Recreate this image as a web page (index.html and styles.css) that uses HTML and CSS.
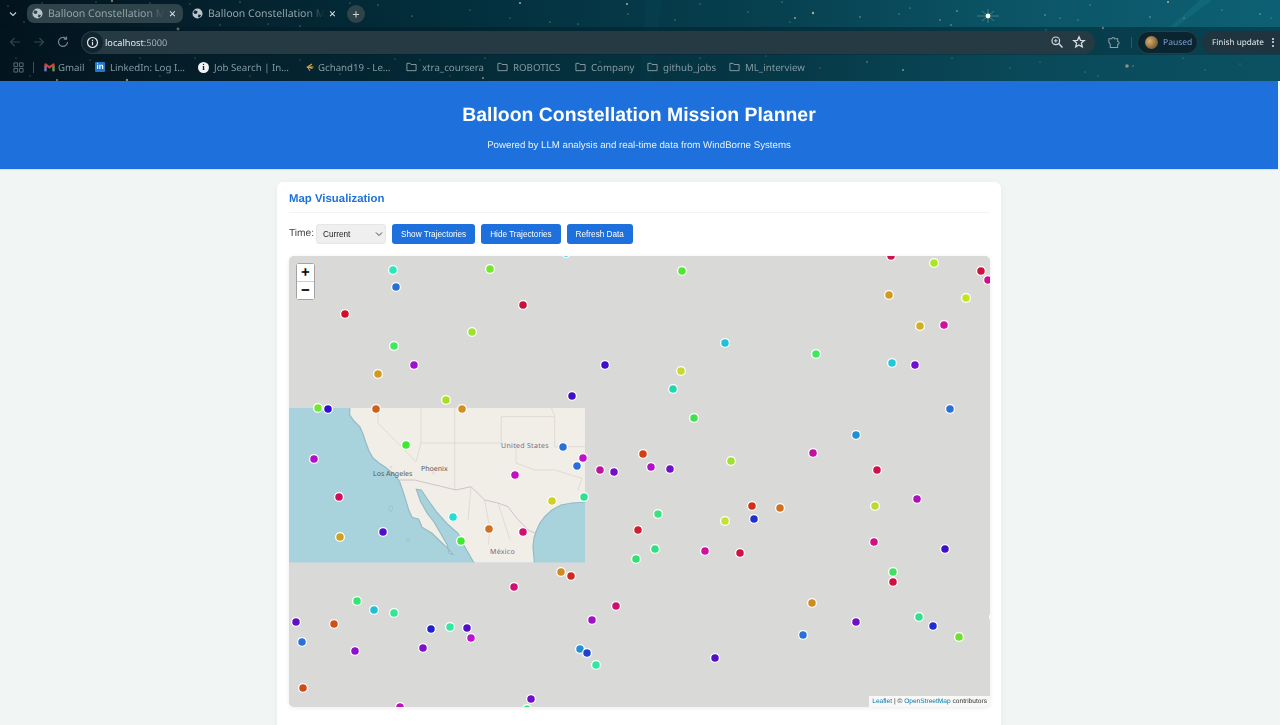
FILE: index.html
```html
<!DOCTYPE html>
<html lang="en">
<head>
  <meta charset="UTF-8">
  <title>Balloon Constellation Mission Planner</title>
  <meta name="viewport" content="width=device-width, initial-scale=1.0">
  <link rel="stylesheet" href="styles.css">
</head>
<body>
  <div class="browser">
    <svg class="stars" viewBox="0 0 1280 81" aria-hidden="true">
      <polygon points="1170,27 1176,27 1212,0 1200,0" fill="#2fa0a8" opacity="0.14"/>
      <polygon points="640,81 652,81 662,0 646,0" fill="#2fa0a8" opacity="0.04"/>
      <g fill="#d8c8a8" opacity="0.8">
        <circle cx="178" cy="29" r="1.4"/><circle cx="112" cy="1" r="0.9"/><circle cx="57" cy="80" r="1"/>
        <circle cx="127" cy="80" r="1.2"/><circle cx="24" cy="22" r="0.5"/><circle cx="70" cy="8" r="0.5"/>
        <circle cx="8" cy="6" r="0.5"/><circle cx="42" cy="3" r="0.5"/><circle cx="96" cy="2" r="0.5"/>
        <circle cx="150" cy="3" r="0.5"/><circle cx="190" cy="4" r="0.5"/><circle cx="220" cy="25" r="0.5"/>
        <circle cx="240" cy="2" r="0.6"/><circle cx="268" cy="24" r="0.5"/><circle cx="300" cy="26" r="0.6"/>
        <circle cx="350" cy="3" r="0.5"/><circle cx="16" cy="58" r="0.5"/><circle cx="30" cy="76" r="0.5"/>
        <circle cx="90" cy="60" r="0.5"/><circle cx="140" cy="58" r="0.5"/><circle cx="160" cy="76" r="0.5"/>
        <circle cx="195" cy="58" r="0.5"/><circle cx="250" cy="76" r="0.5"/><circle cx="300" cy="60" r="0.5"/>
        <circle cx="340" cy="74" r="0.6"/><circle cx="395" cy="59" r="0.5"/><circle cx="450" cy="76" r="0.5"/>
        <circle cx="483" cy="78" r="1"/><circle cx="378" cy="5" r="0.6"/><circle cx="412" cy="16" r="0.6"/>
        <circle cx="470" cy="10" r="0.5"/><circle cx="520" cy="3" r="1"/><circle cx="510" cy="18" r="0.5"/>
        <circle cx="550" cy="22" r="0.6"/><circle cx="578" cy="24" r="0.6"/><circle cx="627" cy="4" r="1"/>
        <circle cx="628" cy="14" r="0.6"/><circle cx="675" cy="20" r="0.6"/><circle cx="748" cy="12" r="0.6"/>
        <circle cx="700" cy="4" r="0.5"/><circle cx="782" cy="2" r="0.6"/><circle cx="790" cy="22" r="0.5"/>
        <circle cx="795" cy="18" r="0.9"/><circle cx="813" cy="13" r="1.2"/><circle cx="860" cy="17" r="0.7"/>
        <circle cx="899" cy="14" r="0.6"/><circle cx="910" cy="8" r="0.6"/><circle cx="940" cy="20" r="0.7"/>
        <circle cx="957" cy="11" r="0.8"/><circle cx="951" cy="25" r="0.7"/><circle cx="1045" cy="15" r="0.7"/>
        <circle cx="1060" cy="18" r="0.6"/><circle cx="1078" cy="20" r="0.6"/><circle cx="1090" cy="5" r="0.6"/>
        <circle cx="1150" cy="17" r="0.7"/><circle cx="1168" cy="2" r="1"/><circle cx="1184" cy="18" r="0.6"/>
        <circle cx="1222" cy="10" r="0.6"/><circle cx="1260" cy="14" r="0.7"/><circle cx="1271" cy="18" r="0.5"/>
        <circle cx="420" cy="60" r="0.5"/><circle cx="485" cy="58" r="0.6"/><circle cx="600" cy="62" r="0.6"/>
        <circle cx="700" cy="58" r="0.6"/><circle cx="766" cy="56" r="0.5"/><circle cx="820" cy="68" r="0.6"/>
        <circle cx="867" cy="62" r="0.8"/><circle cx="903" cy="70" r="1"/><circle cx="952" cy="58" r="0.6"/>
        <circle cx="1010" cy="68" r="0.6"/><circle cx="1040" cy="62" r="0.5"/><circle cx="1085" cy="72" r="0.6"/>
        <circle cx="1183" cy="58" r="0.6"/><circle cx="1205" cy="70" r="0.6"/><circle cx="1240" cy="64" r="0.5"/>
        <circle cx="1046" cy="30" r="0.7"/><circle cx="1103" cy="28" r="1.2"/><circle cx="1098" cy="76" r="0.6"/>
      </g>
      <g>
        <path d="M977 16H999M988 9V23M982 11L994 21M994 11L982 21" stroke="#cfe8e0" stroke-width="0.5" opacity="0.6"/>
        <circle cx="988" cy="16" r="2.4" fill="#fff6d8"/>
        <circle cx="1127" cy="66" r="1.8" fill="#b8b090"/>
        <circle cx="1133" cy="66" r="0.8" fill="#a8a088"/>
      </g>
    </svg>

    <div class="tabs-row">
      <svg class="tab-list" viewBox="0 0 10 10"><path d="M2 3.5L5 6.5L8 3.5" fill="none" stroke="#c8d2d6" stroke-width="1.1"/></svg>
      <div class="tab active">
        <svg class="globe" viewBox="0 0 12 12"><circle cx="6" cy="6" r="5.5" fill="#b9c4c8"/><path d="M3 2.5L6 3.5L5.5 6L3 6.5L1.5 5ZM7 7L10 7.5L8 10.5L6.5 9.5Z" fill="#2f434b"/></svg>
        <span class="tab-title">Balloon Constellation Mi</span>
        <span class="tab-close">×</span>
      </div>
      <div class="tab">
        <svg class="globe" viewBox="0 0 12 12"><circle cx="6" cy="6" r="5.5" fill="#b9c4c8"/><path d="M3 2.5L6 3.5L5.5 6L3 6.5L1.5 5ZM7 7L10 7.5L8 10.5L6.5 9.5Z" fill="#0a2733"/></svg>
        <span class="tab-title">Balloon Constellation Mi</span>
        <span class="tab-close">×</span>
      </div>
      <span class="new-tab">+</span>
    </div>

    <div class="toolbar">
      <svg class="nav-icon dim" viewBox="0 0 14 14"><path d="M12 7H2.5M6.5 3L2.5 7L6.5 11" fill="none" stroke="currentColor" stroke-width="1.2"/></svg>
      <svg class="nav-icon dim" viewBox="0 0 14 14"><path d="M2 7H11.5M7.5 3L11.5 7L7.5 11" fill="none" stroke="currentColor" stroke-width="1.2"/></svg>
      <svg class="nav-icon" viewBox="0 0 14 14"><path d="M11.5 7A4.5 4.5 0 1 1 10 3.6M10.5 1.5V4.2H7.8" fill="none" stroke="currentColor" stroke-width="1.2"/></svg>
      <div class="omnibox">
        <span class="site-info">
          <svg viewBox="0 0 12 12"><circle cx="6" cy="6" r="4.6" fill="none" stroke="#e4eaec" stroke-width="1.1"/><path d="M6 5.4V8.6M6 3.4V4.5" stroke="#e4eaec" stroke-width="1.1"/></svg>
        </span>
        <span class="url">localhost<span class="url-port">:5000</span></span>
        <span class="omni-actions">
          <svg viewBox="0 0 14 14"><circle cx="5.8" cy="5.8" r="3.8" fill="none" stroke="#d4dcdf" stroke-width="1.2"/><path d="M8.6 8.6L12.5 12.5" stroke="#d4dcdf" stroke-width="1.4"/><path d="M4 5.8H7.6M5.8 4V7.6" stroke="#d4dcdf" stroke-width="0.9"/></svg>
          <svg viewBox="0 0 14 14"><path d="M7 1.8L8.5 5.3L12.3 5.6L9.4 8.1L10.3 11.9L7 9.9L3.7 11.9L4.6 8.1L1.7 5.6L5.5 5.3Z" fill="none" stroke="#d4dcdf" stroke-width="1.3"/></svg>
        </span>
      </div>
      <svg class="puzzle" viewBox="0 0 14 14"><path d="M2 3H5.2C5.2 1 8.2 1 8.2 3H11.5V6C13.5 6 13.5 9 11.5 9V12.5H3.5V9.5C3.5 8 2 7.5 2 6.5Z" fill="none" stroke="#8ea0a6" stroke-width="1.1"/></svg>
      <span class="tool-sep"></span>
      <div class="profile-pill"><span class="avatar"></span><span>Paused</span></div>
      <div class="update-pill"><span>Finish update</span><span class="kebab"><i></i><i></i><i></i></span></div>
    </div>

    <div class="bookmarks">
      <svg class="apps" viewBox="0 0 12 12"><path d="M1 1H5V5H1ZM7 1H11V5H7ZM1 7H5V11H1ZM7 7H11V11H7Z" fill="none" stroke="#5f7278" stroke-width="1"/></svg>
      <span class="bm-sep"></span>
      <a class="bm bm-gmail">
        <svg viewBox="0 0 12 10"><path d="M0.5 1.5V9.5H2.8V4.5L6 7L9.2 4.5V9.5H11.5V1.5L10 0.8L6 4L2 0.8Z" fill="#d8402f"/><path d="M9.2 9.5H11.5V3L9.2 4.5Z" fill="#3aa757"/><path d="M0.5 3V9.5H2.8V4.5Z" fill="#4a80e8"/></svg>
        <span>Gmail</span>
      </a>
      <a class="bm bm-linkedin">
        <span class="li-icon">in</span>
        <span>LinkedIn: Log I…</span>
      </a>
      <a class="bm bm-job">
        <span class="info-icon">i</span>
        <span>Job Search | In…</span>
      </a>
      <a class="bm bm-leet">
        <svg viewBox="0 0 10 10"><path d="M7.5 2L3 5L8 6.5M5 5H9" fill="none" stroke="#e8a33a" stroke-width="1.2"/><path d="M3 5L5.5 9" fill="none" stroke="#aab" stroke-width="1"/></svg>
        <span>Gchand19 - Le…</span>
      </a>
      <a class="bm bm-xtra"><svg viewBox="0 0 12 10"><path d="M1 1H4.5L5.5 2.3H11V9H1Z" fill="none" stroke="#8fa0a8" stroke-width="1"/></svg><span>xtra_coursera</span></a>
      <a class="bm bm-robotics"><svg viewBox="0 0 12 10"><path d="M1 1H4.5L5.5 2.3H11V9H1Z" fill="none" stroke="#8fa0a8" stroke-width="1"/></svg><span>ROBOTICS</span></a>
      <a class="bm bm-company"><svg viewBox="0 0 12 10"><path d="M1 1H4.5L5.5 2.3H11V9H1Z" fill="none" stroke="#8fa0a8" stroke-width="1"/></svg><span>Company</span></a>
      <a class="bm bm-github"><svg viewBox="0 0 12 10"><path d="M1 1H4.5L5.5 2.3H11V9H1Z" fill="none" stroke="#8fa0a8" stroke-width="1"/></svg><span>github_jobs</span></a>
      <a class="bm"><svg viewBox="0 0 12 10"><path d="M1 1H4.5L5.5 2.3H11V9H1Z" fill="none" stroke="#8fa0a8" stroke-width="1"/></svg><span>ML_interview</span></a>
    </div>
  </div>

  <div class="page">
    <header class="site-header">
      <h1>Balloon Constellation Mission Planner</h1>
      <p>Powered by LLM analysis and real-time data from WindBorne Systems</p>
    </header>

    <main class="card">
      <h2>Map Visualization</h2>

      <div class="controls">
        <label for="timeSelect">Time:</label>
        <select id="timeSelect">
          <option>Current</option>
        </select>
        <button>Show Trajectories</button>
        <button>Hide Trajectories</button>
        <button>Refresh Data</button>
      </div>

      <div class="map">
        <svg class="map-canvas" viewBox="289 256 701 451" aria-label="Balloon map">
          <!-- the one tile that loaded -->
          <svg x="289" y="408" width="296" height="154.5" viewBox="289 408 296 154.5">
            <rect x="289" y="408" width="296" height="155" fill="#a9d3dc"/>
            <path class="land" d="M350 400L349.7 415L354 421L359.7 426.7L363 434L366 443L369 451L373 458L379 463L384.7 466.7L390 471L394.7 475L399.7 481.7L404.7 496.7L408.7 510L412 517.3L418.7 519.3L422 527.3L432 533.3L440.7 541.7L448.7 549.3L453 554.5L449 553L447.3 545L439.7 531.7L434 522L427.3 513.3L420.7 501.7L416.3 489.3L421.3 490L428 500L436.3 511.7L447.3 524L458 533.3L464.7 546.7L478 570L535 570L533 546.7L534 538L536 531.7L540 523L544.7 516.7L552 510L561 505L572 503L595 501.7L595 400Z"/>
            <g class="state-lines">
              <path d="M378 400V423L416 461.7"/>
              <path d="M421 400V443L416 461.7"/>
              <path d="M454.7 400V490"/>
              <path d="M420.7 443H501.3V416.7H554.7V446.7H585"/>
              <path d="M516 443V463L535 470L555 470L576 476.7L582 478L578 490"/>
              <path d="M548 400L555 416.7"/>
              <path d="M471 487L468 520M484.7 500L490 530L488 545M498 503L510 540"/>
            </g>
            <path class="country-line" d="M398 480L414.7 480L456 490L471 486.7L484.7 500L498 503L508 506.7L515 516L521.3 523L528 530L534.7 533"/>
            <g class="lakes">
              <ellipse cx="390.7" cy="508.5" rx="1.8" ry="3"/>
              <ellipse cx="408" cy="540" rx="1.8" ry="1.5"/>
            </g>
            <text class="tile-label state" x="501" y="447.5">United States</text>
            <text class="tile-label" x="421" y="471">Phoenix</text>
            <text class="tile-label" x="373" y="476">Los Angeles</text>
            <text class="tile-label state" x="490" y="553.5">México</text>
            <circle class="city" cx="433.5" cy="473" r="1"/>
            <circle class="city" cx="391" cy="467" r="1"/>
          </svg>

          <g class="markers">
            <circle cx="393" cy="270" fill="#2be8b8"/><circle cx="490" cy="269" fill="#72e82a"/>
            <circle cx="566" cy="253" fill="#22c0e0"/><circle cx="682" cy="271" fill="#4fe82e"/>
            <circle cx="891" cy="256" fill="#d0104f"/><circle cx="934" cy="263" fill="#a8e820"/>
            <circle cx="981" cy="271" fill="#d01040"/><circle cx="988" cy="280" fill="#d0108a"/>
            <circle cx="396" cy="287" fill="#2a6fd8"/><circle cx="889" cy="295" fill="#d09a20"/>
            <circle cx="966" cy="298" fill="#c4e21e"/><circle cx="523" cy="305" fill="#c8103a"/>
            <circle cx="345" cy="314" fill="#d0102a"/><circle cx="920" cy="326" fill="#d0b020"/>
            <circle cx="944" cy="325" fill="#d010a0"/><circle cx="472" cy="332" fill="#a0e030"/>
            <circle cx="394" cy="346" fill="#40e860"/><circle cx="725" cy="343" fill="#20c0d8"/>
            <circle cx="816" cy="354" fill="#40e860"/><circle cx="414" cy="365" fill="#a010d0"/>
            <circle cx="605" cy="365" fill="#4010c8"/><circle cx="892" cy="363" fill="#20c8d8"/>
            <circle cx="915" cy="365" fill="#7010d0"/><circle cx="378" cy="374" fill="#d09a20"/>
            <circle cx="681" cy="371" fill="#c8d830"/><circle cx="673" cy="389" fill="#20d8b0"/>
            <circle cx="572" cy="396" fill="#4010c8"/><circle cx="446" cy="400" fill="#a8e020"/>
            <circle cx="318" cy="408" fill="#70e830"/><circle cx="328" cy="409" fill="#3010d0"/>
            <circle cx="376" cy="409" fill="#d06018"/><circle cx="462" cy="409" fill="#d09020"/>
            <circle cx="694" cy="418" fill="#40e050"/><circle cx="950" cy="409" fill="#2a70d8"/>
            <circle cx="856" cy="435" fill="#2090d0"/><circle cx="406" cy="445" fill="#40e830"/>
            <circle cx="563" cy="447" fill="#2a70d8"/><circle cx="643" cy="454" fill="#d04010"/>
            <circle cx="583" cy="458" fill="#c010c8"/><circle cx="731" cy="461" fill="#a0e030"/>
            <circle cx="314" cy="459" fill="#b010c8"/><circle cx="813" cy="453" fill="#c010a0"/>
            <circle cx="577" cy="466" fill="#2a70d8"/><circle cx="600" cy="470" fill="#c010a0"/>
            <circle cx="614" cy="472" fill="#7010c8"/><circle cx="651" cy="467" fill="#b010c8"/>
            <circle cx="670" cy="469" fill="#7010c8"/><circle cx="877" cy="470" fill="#d0104a"/>
            <circle cx="515" cy="475" fill="#c010c0"/><circle cx="339" cy="497" fill="#d0105a"/>
            <circle cx="584" cy="497" fill="#30e090"/><circle cx="552" cy="501" fill="#d0d020"/>
            <circle cx="917" cy="499" fill="#b010b8"/><circle cx="752" cy="506" fill="#d03018"/>
            <circle cx="780" cy="508" fill="#d07020"/><circle cx="875" cy="506" fill="#c0d830"/>
            <circle cx="658" cy="514" fill="#40e080"/><circle cx="754" cy="519" fill="#2030d0"/>
            <circle cx="725" cy="521" fill="#c8e030"/><circle cx="638" cy="530" fill="#d02030"/>
            <circle cx="453" cy="517" fill="#20e0d0"/><circle cx="489" cy="529" fill="#d07020"/>
            <circle cx="523" cy="532" fill="#d01070"/><circle cx="340" cy="537" fill="#d0a020"/>
            <circle cx="383" cy="532" fill="#5010d0"/><circle cx="461" cy="541" fill="#40e830"/>
            <circle cx="874" cy="542" fill="#d01080"/><circle cx="655" cy="549" fill="#30e080"/>
            <circle cx="705" cy="551" fill="#d010a0"/><circle cx="740" cy="553" fill="#d01040"/>
            <circle cx="945" cy="549" fill="#4010c8"/><circle cx="636" cy="559" fill="#30e070"/>
            <circle cx="893" cy="572" fill="#40e060"/><circle cx="561" cy="572" fill="#d08a20"/>
            <circle cx="571" cy="576" fill="#d02a20"/><circle cx="893" cy="582" fill="#d01040"/>
            <circle cx="514" cy="587" fill="#d01070"/><circle cx="812" cy="603" fill="#d08a20"/>
            <circle cx="357" cy="601" fill="#30e870"/><circle cx="616" cy="606" fill="#d01070"/>
            <circle cx="374" cy="610" fill="#20c0d0"/><circle cx="394" cy="613" fill="#30e890"/>
            <circle cx="919" cy="617" fill="#30e090"/><circle cx="592" cy="620" fill="#a010c8"/>
            <circle cx="296" cy="622" fill="#6010c8"/><circle cx="334" cy="624" fill="#d05018"/>
            <circle cx="856" cy="622" fill="#7010c8"/><circle cx="431" cy="629" fill="#2020d0"/>
            <circle cx="450" cy="627" fill="#30e8a0"/><circle cx="467" cy="628" fill="#5010c8"/>
            <circle cx="933" cy="626" fill="#2030d0"/><circle cx="803" cy="635" fill="#2a70d8"/>
            <circle cx="471" cy="638" fill="#c010d0"/><circle cx="959" cy="637" fill="#70e030"/>
            <circle cx="302" cy="642" fill="#2a70d8"/><circle cx="423" cy="648" fill="#8010c8"/>
            <circle cx="355" cy="651" fill="#9010d0"/><circle cx="580" cy="649" fill="#2090d8"/>
            <circle cx="587" cy="653" fill="#2040d0"/><circle cx="596" cy="665" fill="#30e8a0"/>
            <circle cx="715" cy="658" fill="#5010c8"/><circle cx="303" cy="688" fill="#d04a18"/>
            <circle cx="531" cy="699" fill="#7010c8"/><circle cx="400" cy="707" fill="#c010c0"/>
            <circle cx="527" cy="709" fill="#40e880"/><circle cx="994" cy="617" fill="#40c0d0"/>
          </g>
        </svg>

        <div class="zoom-control">
          <a>+</a>
          <a>−</a>
        </div>
        <div class="attribution"><a>Leaflet</a> | © <a>OpenStreetMap</a> contributors</div>
      </div>
    </main>
  </div>
</body>
</html>
```

FILE: styles.css
```css
* {
  box-sizing: border-box;
}

html, body {
  height: 725px;
  overflow: hidden;
}

body {
  margin: 0;
  font-family: "Liberation Sans", Arial, sans-serif;
  background: #f1f5f4;
  text-rendering: geometricPrecision;
}

/* browser window frame */
.browser {
  position: relative;
  height: 81px;
  font-family: "Noto Sans", sans-serif;
  background: linear-gradient(90deg, #03131d 0%, #04222e 18%, #032e3c 35%, #07404f 60%, #0b5567 80%, #0d6073 100%);
  overflow: hidden;
  filter: blur(0.4px);
}

.stars {
  position: absolute;
  inset: 0;
  width: 100%;
  height: 100%;
}

.tabs-row,
.toolbar,
.bookmarks {
  position: relative;
  display: flex;
  align-items: center;
}

.tabs-row {
  height: 27px;
  padding-left: 8px;
}

.tab-list {
  width: 10px;
  height: 10px;
  margin-right: 9px;
}

.tab {
  display: flex;
  align-items: center;
  width: 156px;
  height: 19px;
  padding: 0 6px 0 5px;
  margin-right: 4px;
  border-radius: 7px;
  color: #93a4aa;
  font-size: 10.5px;
}

.tab.active {
  background: #2f434b;
}

.globe {
  flex: none;
  width: 11px;
  height: 11px;
  margin-right: 5px;
}

.tab-title {
  flex: 1;
  white-space: nowrap;
  -webkit-mask-image: linear-gradient(90deg, #000 82%, transparent 97%);
  mask-image: linear-gradient(90deg, #000 82%, transparent 97%);
}

.tab-close {
  color: #dfe6e8;
  font-size: 12px;
  width: 10px;
  text-align: center;
}

.new-tab {
  display: flex;
  align-items: center;
  justify-content: center;
  width: 18px;
  height: 18px;
  border-radius: 50%;
  background: #2f434b;
  color: #cdd6d9;
  font-size: 13px;
}

.toolbar {
  height: 28px;
  padding: 2px 0 0 8px;
  background: rgba(3, 24, 34, 0.42);
  color: #7f9096;
}

.nav-icon {
  flex: none;
  width: 14px;
  height: 14px;
  margin-right: 10px;
  color: #74868c;
}

.nav-icon.dim {
  color: #2e4650;
}

.omnibox {
  display: flex;
  align-items: center;
  width: 1014px;
  height: 23px;
  margin-left: 1px;
  padding-left: 1px;
  border-radius: 12px;
  background: #263a44;
}

.site-info {
  display: flex;
  align-items: center;
  justify-content: center;
  width: 21px;
  height: 21px;
  border-radius: 50%;
  background: #11252f;
}

.site-info svg {
  width: 13px;
  height: 13px;
}

.url {
  margin-left: 2px;
  color: #e3e9eb;
  font-size: 9.2px;
}

.url-port {
  color: #9fb0b6;
}

.omni-actions {
  display: flex;
  gap: 8px;
  margin-left: auto;
  margin-right: 9px;
}

.omni-actions svg {
  width: 14px;
  height: 14px;
}

.puzzle {
  width: 13px;
  height: 13px;
  margin-left: 12px;
}

.tool-sep {
  width: 1px;
  height: 11px;
  margin: 0 5px 0 11px;
  background: #3a525c;
}

.profile-pill {
  display: flex;
  align-items: center;
  gap: 5px;
  width: 61px;
  height: 23px;
  padding-left: 7px;
  border: 1px solid #25404c;
  border-radius: 12px;
  background: #0b2530;
  color: #7f9fd0;
  font-size: 8.5px;
}

.avatar {
  width: 13px;
  height: 13px;
  border-radius: 50%;
  background: radial-gradient(circle at 35% 40%, #d8b070, #8a6a3a 60%, #4a4a48);
}

.update-pill {
  display: flex;
  align-items: center;
  justify-content: space-between;
  flex: 1;
  height: 23px;
  margin-left: 4px;
  padding: 0 6px 0 10px;
  border-radius: 12px 0 0 12px;
  background: #1f343e;
  color: #e3e9eb;
  font-size: 8.2px;
}

.kebab {
  display: flex;
  flex-direction: column;
  gap: 1.5px;
}

.kebab i {
  width: 2px;
  height: 2px;
  background: #e3e9eb;
  border-radius: 50%;
}

.bookmarks {
  height: 26px;
  padding: 0 0 2px 13px;
  background: rgba(3, 24, 34, 0.2);
  color: #849aa2;
  font-size: 9.7px;
  white-space: nowrap;
}

.apps {
  width: 11px;
  height: 11px;
}

.bm-sep {
  width: 1px;
  height: 11px;
  margin: 0 10px 0 9px;
  background: #3a525c;
}

.bm {
  display: flex;
  align-items: center;
  gap: 5px;
  margin-right: 10px;
}

.bm svg {
  flex: none;
  width: 11px;
  height: 10px;
}

.bm-gmail { width: 41px; gap: 3px; }
.bm-linkedin { width: 93px; }
.bm-job { width: 96px; }
.bm-leet { width: 92px; gap: 3px; }
.bm-xtra { width: 81px; }
.bm-robotics { width: 68px; }
.bm-company { width: 62px; }
.bm-github { width: 72px; }

.li-icon {
  flex: none;
  width: 10px;
  height: 10px;
  border-radius: 1px;
  background: #1f78c8;
  color: #fff;
  font: bold 8px/10px "Liberation Sans", sans-serif;
  text-align: center;
}

.info-icon {
  flex: none;
  width: 11px;
  height: 11px;
  border-radius: 50%;
  background: #f2f4f5;
  color: #10232c;
  font: bold 9px/11px "Liberation Serif", serif;
  text-align: center;
}

/* app page */
.page {
  padding-right: 2px;
  filter: blur(0.3px);
}

.site-header {
  height: 89px;
  padding-top: 22px;
  border-bottom: 1px solid #d4e2f4;
  background: #1e71dd;
  color: #fff;
  text-align: center;
}

.site-header h1 {
  margin: 0;
  font-size: 19.4px;
  line-height: 24px;
}

.site-header p {
  margin: 12px 0 0;
  font-size: 9.7px;
  line-height: 14px;
  color: #e8f0fb;
}

.card {
  width: 724px;
  height: 600px;
  margin: 12px auto 0;
  padding: 11px 12px;
  border-radius: 6px;
  background: #fff;
  box-shadow: 0 1px 6px rgba(0, 0, 0, 0.05);
}

.card h2 {
  margin: 0 0 11px;
  padding-bottom: 6px;
  border-bottom: 1px solid #f3f3f3;
  font-size: 11.4px;
  line-height: 13px;
  color: #1e71dd;
}

.controls {
  display: flex;
  align-items: center;
  gap: 6px;
  height: 20px;
  margin-bottom: 12px;
  color: #444;
  font-size: 10.2px;
}

.controls label {
  margin-right: -4px;
  margin-top: -1px;
}

.controls select {
  appearance: none;
  width: 70px;
  height: 20px;
  padding: 0 0 0 6px;
  border: 1px solid #e6e6e6;
  border-radius: 3px;
  background: #efefef url("data:image/svg+xml,%3Csvg xmlns='http://www.w3.org/2000/svg' width='8' height='6'%3E%3Cpath d='M1 1.5L4 4.5L7 1.5' fill='none' stroke='%23444' stroke-width='1'/%3E%3C/svg%3E") no-repeat right 2px center;
  color: #222;
  font: 8.2px "Liberation Sans", sans-serif;
}

.controls button {
  height: 20px;
  padding: 0 9px;
  border: 0;
  border-radius: 3px;
  background: #1e71dd;
  color: #fff;
  font: 8.2px "Liberation Sans", sans-serif;
}

.map {
  position: relative;
  width: 701px;
  height: 451px;
  overflow: hidden;
  border-radius: 5px;
  background: #d9d9d8;
  box-shadow: 0 1px 4px rgba(0, 0, 0, 0.08);
}

.map-canvas {
  display: block;
  width: 100%;
  height: 100%;
}

.land {
  fill: #f0eee7;
  stroke: #93bbc6;
  stroke-width: 1.2;
}

.state-lines path {
  fill: none;
  stroke: #dad7ce;
  stroke-width: 0.8;
}

.country-line {
  fill: none;
  stroke: #cbb4c6;
  stroke-width: 0.8;
}

.lakes ellipse {
  fill: #a9d3dc;
  stroke: #8fb6c2;
  stroke-width: 0.5;
}

.tile-label {
  font-family: "Noto Sans", sans-serif;
  font-size: 7px;
  fill: #555;
}

.tile-label.state {
  fill: #7a6a80;
  letter-spacing: 0.3px;
}

.city {
  fill: #fff;
  stroke: #b8b8b8;
  stroke-width: 0.5;
}

.markers circle {
  r: 4.4px;
  stroke: #fff;
  stroke-width: 1.3;
}

.zoom-control {
  position: absolute;
  top: 7px;
  left: 7px;
  width: 19px;
  border: 1.5px solid rgba(0, 0, 0, 0.25);
  border-radius: 3px;
  background-clip: padding-box;
}

.zoom-control a {
  display: block;
  height: 17.5px;
  background: #fff;
  color: #000;
  font: bold 15px/18px "Liberation Sans", sans-serif;
  text-align: center;
}

.zoom-control a:first-child {
  border-bottom: 1px solid #ccc;
}

.attribution {
  position: absolute;
  right: 0;
  bottom: 0;
  padding: 0 3px;
  background: rgba(255, 255, 255, 0.8);
  color: #333;
  font-size: 6.6px;
  line-height: 11px;
}

.attribution a {
  color: #0078a8;
}
```
